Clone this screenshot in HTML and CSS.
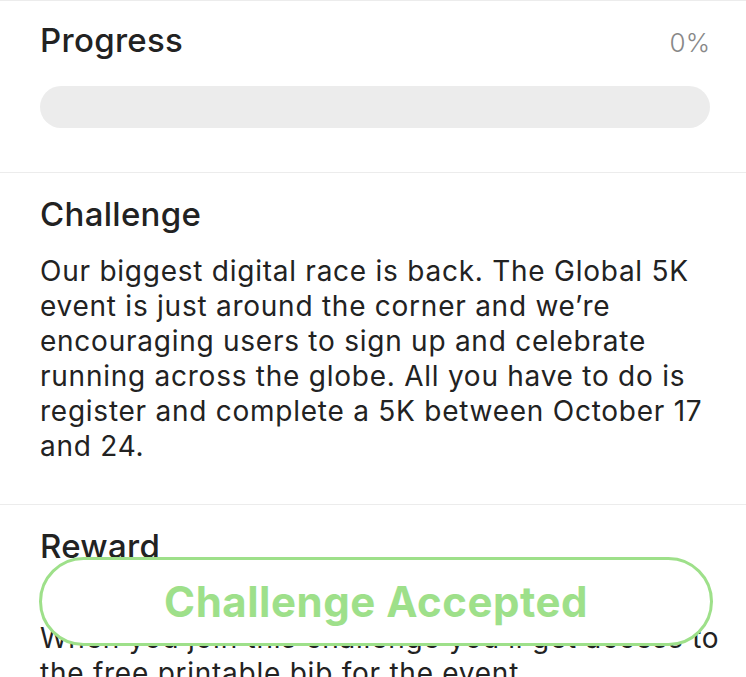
FILE: index.html
```html
<!DOCTYPE html>
<html lang="en">
<head>
<meta charset="utf-8">
<title>Global 5K Challenge</title>
<link rel="stylesheet" href="styles.css">
</head>
<body>
<main class="page">
  <section class="section section-progress">
    <div class="row">
      <h2 class="heading">Progress</h2>
      <span class="percent">0%</span>
    </div>
    <div class="bar"><div class="bar-fill" style="width:0%"></div></div>
  </section>
  <section class="section section-challenge">
    <h2 class="heading">Challenge</h2>
    <p class="text">Our biggest digital race is back. The Global 5K event is just around the corner and we’re encouraging users to sign up and celebrate running across the globe. All you have to do is register and complete a 5K between October 17 and 24.</p>
  </section>
  <section class="section section-reward">
    <h2 class="heading">Reward</h2>
    <p class="text text-reward">When you join this challenge you’ll get access to the free printable bib for the event.</p>
  </section>
</main>
<button class="accept" type="button">Challenge Accepted</button>
</body>
</html>
```
FILE: styles.css
```css
html, body {
  margin: 0;
  padding: 0;
  background: #ffffff;
  overflow: hidden;
}
body {
  font-family: Inter, "Noto Sans", sans-serif;
  color: #222222;
}
.page {
  display: flex;
  flex-direction: column;
}
.section {
  border-top: 1px solid #ececec;
  padding: 0 36px 0 40px;
}
.section-progress {
  padding-top: 18px;
  height: 153px;
}
.row {
  display: flex;
  justify-content: space-between;
  align-items: baseline;
}
.heading {
  margin: 0;
  font-size: 33px;
  font-weight: 500;
  line-height: 42px;
  letter-spacing: 0.3px;
  color: #222222;
}
.percent {
  font-size: 26px;
  font-weight: 300;
  color: #888888;
}
.bar {
  margin-top: 25px;
  height: 42px;
  border-radius: 21px;
  background: #ececec;
  overflow: hidden;
}
.bar-fill {
  height: 100%;
  background: #9ee08a;
}
.section-challenge {
  padding-top: 20px;
  height: 311px;
}
.text {
  margin: 19px -14px 0 0;
  font-size: 28px;
  line-height: 35px;
  font-weight: 400;
  letter-spacing: 0.75px;
  color: #222222;
}
.section-reward {
  padding-top: 20px;
}
.text-reward {
  margin-top: 54px;
}
.accept {
  position: fixed;
  left: 39px;
  top: 557px;
  width: 674px;
  height: 89px;
  box-sizing: border-box;
  border: 3px solid #9ee08a;
  border-radius: 45px;
  background: #ffffff;
  color: #9ee08a;
  font-family: Inter, "Noto Sans", sans-serif;
  font-size: 42px;
  font-weight: 700;
  letter-spacing: 0.5px;
  padding: 0;
  cursor: pointer;
}
```
